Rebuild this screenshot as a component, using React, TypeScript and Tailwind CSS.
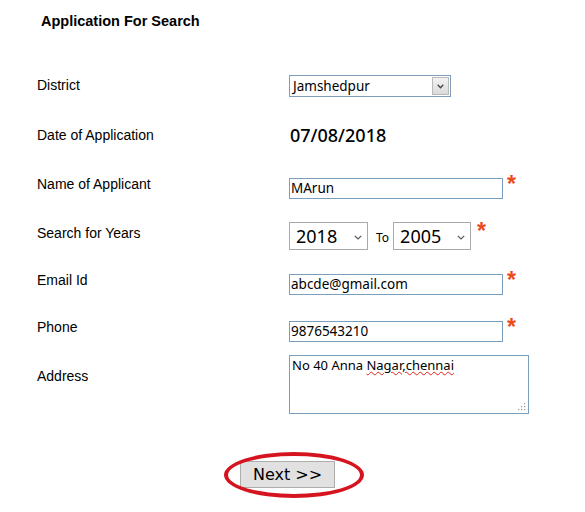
import React from "react";

const Star = () => (
  <span className="ml-[4px] font-['Liberation_Sans',Arial,sans-serif] text-[23px] leading-[22px] font-bold text-[#ec4a1c]">
    *
  </span>
);

const Chevron = ({ className }: { className?: string }) => (
  <svg width="8" height="5" viewBox="0 0 8 5" className={className}>
    <path d="M0.8 0.8 L4 4 L7.2 0.8" fill="none" stroke="#555" strokeWidth="1.2" />
  </svg>
);

const label = "w-[252px] text-[14px] leading-[16px] text-black";
const noto = "font-['Noto_Sans',sans-serif]";
const inputBox = `w-[214px] h-[21px] border border-[#7a9fbe] bg-white pl-[1px] text-[13.5px] leading-[19px] text-black ${noto}`;

export default function App() {
  return (
    <div className="relative w-[585px] h-[512px] overflow-hidden bg-white text-black font-['Liberation_Sans',Arial,sans-serif]">
      <div className="pt-[12px] pl-[41px] text-[14.5px] leading-[18px] font-bold">Application For Search</div>

      <div className="mt-[45px] pl-[37px] flex flex-col">
        {/* District */}
        <div className="flex items-start h-[49px]">
          <div className={`${label} mt-[2px]`}>District</div>
          <div className="flex h-[22px] w-[162px] border border-[#7f9db9] bg-white">
            <span className={`flex-1 pl-[3px] text-[13.5px] leading-[20px] ${noto}`}>Jamshedpur</span>
            <span className="my-[1px] mr-[1px] w-[17px] h-[18px] border border-[#b9b9b9] bg-gradient-to-b from-[#f3f3f3] to-[#dadada] flex items-center justify-center">
              <svg width="7" height="5" viewBox="0 0 7 5">
                <path d="M0.7 0.8 L3.5 3.8 L6.3 0.8" fill="none" stroke="#444" strokeWidth="1.3" />
              </svg>
            </span>
          </div>
        </div>

        {/* Date */}
        <div className="flex items-start h-[49px]">
          <div className={`${label} mt-[3px]`}>Date of Application</div>
          <div className={`text-[18px] leading-[22px] font-medium pl-[1px] ${noto}`}>07/08/2018</div>
        </div>

        {/* Name */}
        <div className="flex items-start h-[47px]">
          <div className={`${label} mt-[3px]`}>Name of Applicant</div>
          <div className={`${inputBox} mt-[5px]`}>MArun</div>
          <Star />
        </div>

        {/* Years */}
        <div className="flex items-start h-[49px]">
          <div className={`${label} mt-[5px]`}>Search for Years</div>
          <div className={`mt-[2px] w-[79px] h-[28px] border border-[#a9a9a9] bg-white flex items-center justify-between pl-[6px] pr-[5px] ${noto}`}>
            <span className="text-[18px] leading-[26px]">2018</span>
            <Chevron className="mt-[3px]" />
          </div>
          <span className={`ml-[8px] mr-[4px] mt-[10px] text-[12px] leading-[16px] ${noto}`}>To</span>
          <div className={`mt-[2px] w-[78px] h-[28px] border border-[#a9a9a9] bg-white flex items-center justify-between pl-[6px] pr-[5px] ${noto}`}>
            <span className="text-[18px] leading-[26px]">2005</span>
            <Chevron className="mt-[3px]" />
          </div>
          <span className="ml-[2px]">
            <Star />
          </span>
        </div>

        {/* Email */}
        <div className="flex items-start h-[47px]">
          <div className={`${label} mt-[3px]`}>Email Id</div>
          <div className={`${inputBox} mt-[5px]`}>abcde@gmail.com</div>
          <Star />
        </div>

        {/* Phone */}
        <div className="flex items-start h-[39px]">
          <div className={`${label} mt-[3px]`}>Phone</div>
          <div className={`${inputBox} mt-[5px]`}>9876543210</div>
          <Star />
        </div>

        {/* Address */}
        <div className="flex items-start h-[59px]">
          <div className={`${label} mt-[13px]`}>Address</div>
          <div className={`relative w-[240px] h-[59px] border border-[#7a9fbe] bg-white pl-[2px] text-[13px] leading-[19px] ${noto}`}>
            No 40 Anna{" "}
            <span className="underline decoration-wavy decoration-[#e02020] decoration-[1px] underline-offset-[1px]">
              Nagar,chennai
            </span>
            <svg width="8" height="8" viewBox="0 0 8 8" className="absolute right-[2px] bottom-[2px]">
              <rect x="6" y="0" width="1.2" height="1.2" fill="#9a9a9a" />
              <rect x="3" y="3" width="1.2" height="1.2" fill="#9a9a9a" />
              <rect x="6" y="3" width="1.2" height="1.2" fill="#9a9a9a" />
              <rect x="0" y="6" width="1.2" height="1.2" fill="#9a9a9a" />
              <rect x="3" y="6" width="1.2" height="1.2" fill="#9a9a9a" />
              <rect x="6" y="6" width="1.2" height="1.2" fill="#9a9a9a" />
            </svg>
          </div>
        </div>
      </div>

      <div className="mt-[47px] ml-[240px] relative w-[95px]">
        <div className="w-[95px] h-[27px] border border-[#adadad] bg-[#e1e1e1] flex items-center justify-center font-['DejaVu_Sans',sans-serif] text-[16px] leading-[20px] text-black">
          Next &gt;&gt;
        </div>
      </div>

      <div className="absolute left-[224px] top-[452px] w-[140px] h-[46px] rounded-[50%] border-[4px] border-[#d5141f]" />
    </div>
  );
}
